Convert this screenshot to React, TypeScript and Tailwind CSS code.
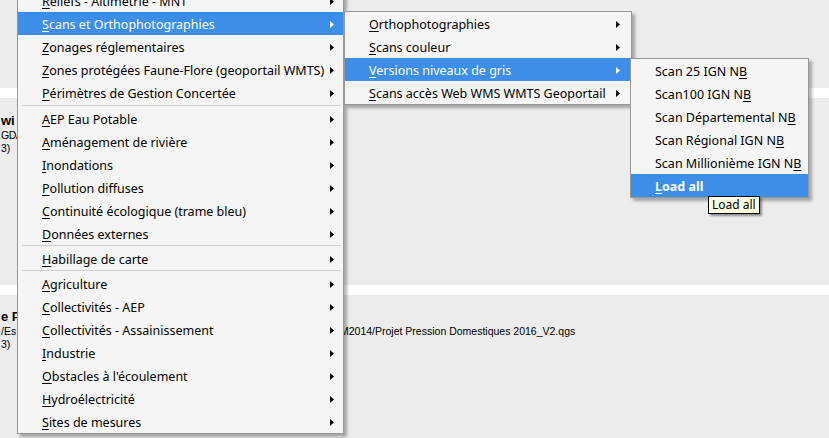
import React from "react";

type Entry =
  | { sep: number }
  | { label: string; mn?: number; arrow?: boolean; active?: boolean; bold?: boolean };

const mainMenu: Entry[] = [
  { label: "Reliefs - Altimétrie - MNT", mn: 0, arrow: true },
  { label: "Scans et Orthophotographies", mn: 0, arrow: true, active: true },
  { label: "Zonages réglementaires", mn: 0, arrow: true },
  { label: "Zones protégées Faune-Flore (geoportail WMTS)", mn: 0, arrow: true },
  { label: "Périmètres de Gestion Concertée", mn: 0, arrow: true },
  { sep: 3 },
  { label: "AEP Eau Potable", mn: 0, arrow: true },
  { label: "Aménagement de rivière", mn: 0, arrow: true },
  { label: "Inondations", mn: 0, arrow: true },
  { label: "Pollution diffuses", mn: 0, arrow: true },
  { label: "Continuité écologique (trame bleu)", mn: 0, arrow: true },
  { label: "Données externes", mn: 0, arrow: true },
  { sep: 2 },
  { label: "Habillage de carte", mn: 0, arrow: true },
  { sep: 2 },
  { label: "Agriculture", mn: 0, arrow: true },
  { label: "Collectivités - AEP", mn: 0, arrow: true },
  { label: "Collectivités - Assainissement", mn: 0, arrow: true },
  { label: "Industrie", mn: 0, arrow: true },
  { label: "Obstacles à l'écoulement", mn: 0, arrow: true },
  { label: "Hydroélectricité", mn: 0, arrow: true },
  { label: "Sites de mesures", mn: 0, arrow: true },
];

const scansMenu: Entry[] = [
  { label: "Orthophotographies", mn: 0, arrow: true },
  { label: "Scans couleur", mn: 0, arrow: true },
  { label: "Versions niveaux de gris", mn: 0, arrow: true, active: true },
  { label: "Scans accès Web WMS WMTS Geoportail", mn: 0, arrow: true },
];

const grisMenu: Entry[] = [
  { label: "Scan 25 IGN NB", mn: 13 },
  { label: "Scan100 IGN NB", mn: 13 },
  { label: "Scan Départemental NB", mn: 20 },
  { label: "Scan Régional IGN NB", mn: 19 },
  { label: "Scan Millionième IGN NB", mn: 22 },
  { label: "Load all", mn: 0, active: true, bold: true },
];

function Arrow({ white }: { white?: boolean }) {
  return (
    <svg width="4" height="7" viewBox="0 0 4 7" className="shrink-0">
      <polygon points="0,0 4,3.5 0,7" fill={white ? "#ffffff" : "#000000"} />
    </svg>
  );
}

function Label({ text, mn }: { text: string; mn?: number }) {
  if (mn === undefined) return <span>{text}</span>;
  return (
    <span className="whitespace-pre">
      {text.slice(0, mn)}
      <span className="underline underline-offset-[2px]">{text[mn]}</span>
      {text.slice(mn + 1)}
    </span>
  );
}

function Menu({ items, className, pr }: { items: Entry[]; className: string; pr: string }) {
  return (
    <div
      className={`absolute border border-[#979797] bg-[#f5f5f5] shadow-[3px_3px_3px_rgba(0,0,0,0.3)] ${className}`}
    >
      {items.map((it, i) =>
        "sep" in it ? (
          <div
            key={i}
            className={`flex items-start pl-[4px] pr-[2px] ${it.sep === 3 ? "h-[3px] pt-px" : "h-[2px]"}`}
          >
            <div className="h-px w-full bg-[#d0d0d0]" />
          </div>
        ) : (
          <div
            key={i}
            className={`flex h-[23px] items-center justify-between pl-[24px] pt-[4px] ${pr} ${
              it.active ? "bg-[#3c8ee8] text-white" : "text-black"
            } ${it.bold ? "font-bold" : ""}`}
          >
            <Label text={it.label} mn={it.mn} />
            {it.arrow && (
              <span className="-mt-[3px] flex">
                <Arrow white={it.active} />
              </span>
            )}
          </div>
        )
      )}
    </div>
  );
}

export default function App() {
  return (
    <div className="relative h-[438px] w-[829px] overflow-hidden bg-[#ececec] font-['Liberation_Sans',Arial,sans-serif] text-[10.5px] text-black">
      {/* project list behind the menus */}
      <div className="flex flex-col">
        <div className="h-[88px]" />
        <div className="h-[10px] bg-white" />
        <div className="flex h-[187px] flex-col pl-[1px] pt-[14px] leading-[13px]">
          <div className="text-[13px] font-bold leading-[17px]">wi</div>
          <div className="tracking-[-0.5px]">GDA</div>
          <div>3)</div>
        </div>
        <div className="h-[10px] bg-white" />
        <div className="flex flex-col pl-[1px] pt-[13px] leading-[13px]">
          <div className="text-[13px] font-bold leading-[17px]">e P</div>
          <div className="flex">
            <span className="w-[339px]">/Es</span>
            <span>M2014/Projet Pression Domestiques 2016_V2.qgs</span>
          </div>
          <div>3)</div>
        </div>
      </div>

      {/* cascading context menus */}
      <div className="font-['Noto_Sans',sans-serif] text-[12.5px]">
        <Menu items={mainMenu} className="left-[17px] top-[-12px] w-[327px]" pr="pr-[9px]" />
        <Menu items={scansMenu} className="left-[344px] top-[11px] w-[288px]" pr="pr-[11px]" />
        <Menu items={grisMenu} className="left-[630px] top-[58px] w-[179px]" pr="pr-[11px]" />
        <div className="absolute left-[708px] top-[196px] flex h-[18px] items-center border border-black bg-[#ffffe1] px-[3px] text-[12px] leading-none shadow-[2px_2px_2px_rgba(0,0,0,0.4)]">
          Load all
        </div>
      </div>
    </div>
  );
}
